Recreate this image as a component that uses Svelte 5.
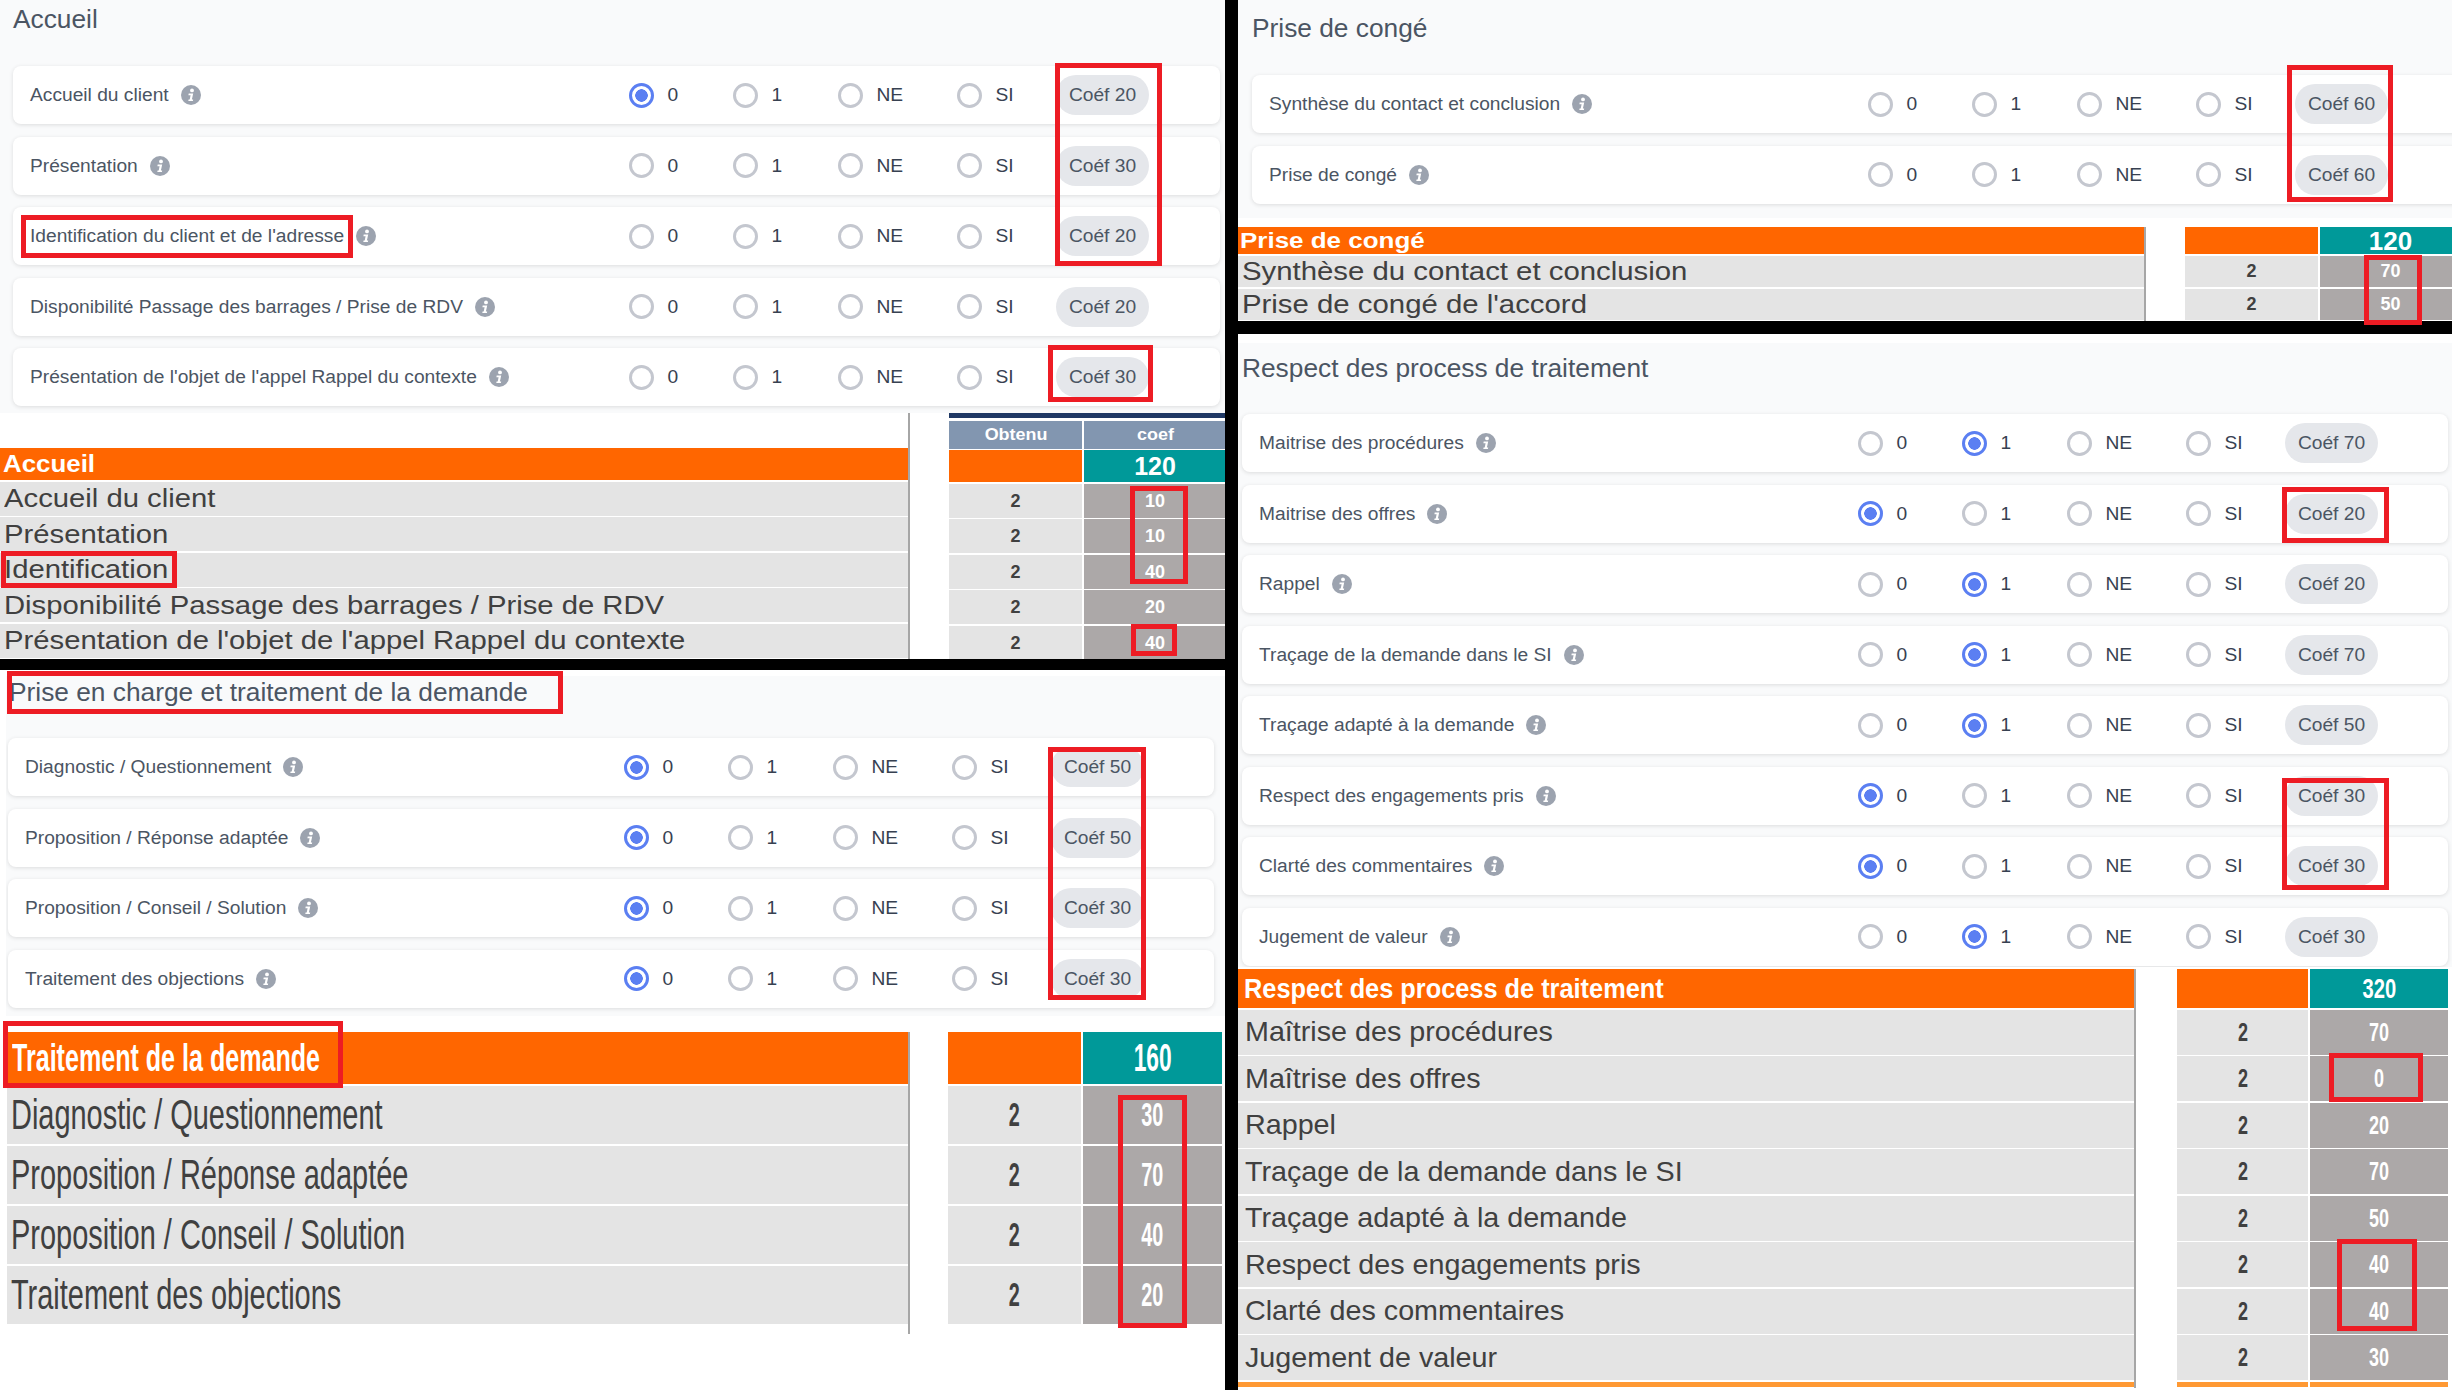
<script>
  const panels = [
    {
      cls: 'p1', title: 'Accueil',
      rows: [
        ['Accueil du client', 0, 20],
        ['Présentation', null, 30],
        ["Identification du client et de l'adresse", null, 20],
        ['Disponibilité Passage des barrages / Prise de RDV', null, 20],
        ["Présentation de l'objet de l'appel Rappel du contexte", null, 30]
      ]
    },
    {
      cls: 'p2', title: 'Prise en charge et traitement de la demande',
      rows: [
        ['Diagnostic / Questionnement', 0, 50],
        ['Proposition / Réponse adaptée', 0, 50],
        ['Proposition / Conseil / Solution', 0, 30],
        ['Traitement des objections', 0, 30]
      ]
    },
    {
      cls: 'p3', title: 'Prise de congé',
      rows: [
        ['Synthèse du contact et conclusion', null, 60],
        ['Prise de congé', null, 60]
      ]
    },
    {
      cls: 'p4', title: 'Respect des process de traitement',
      rows: [
        ['Maitrise des procédures', 1, 70],
        ['Maitrise des offres', 0, 20],
        ['Rappel', 1, 20],
        ['Traçage de la demande dans le SI', 1, 70],
        ['Traçage adapté à la demande', 1, 50],
        ['Respect des engagements pris', 0, 30],
        ['Clarté des commentaires', 0, 30],
        ['Jugement de valeur', 1, 30]
      ]
    }
  ];

  const tables = [
    {
      cls: 't1', head: 'Accueil', total: 120, header: true,
      rows: [['Accueil du client', 10], ['Présentation', 10], ['Identification', 40],
        ['Disponibilité Passage des barrages / Prise de RDV', 20],
        ["Présentation de l'objet de l'appel Rappel du contexte", 40]]
    },
    {
      cls: 't2', head: 'Traitement de la demande', total: 160,
      rows: [['Diagnostic / Questionnement', 30], ['Proposition / Réponse adaptée', 70],
        ['Proposition / Conseil / Solution', 40], ['Traitement des objections', 20]]
    },
    {
      cls: 't3', head: 'Prise de congé', total: 120,
      rows: [['Synthèse du contact et conclusion', 70], ["Prise de congé de l'accord", 50]]
    },
    {
      cls: 't4', head: 'Respect des process de traitement', total: 320, foot: true,
      rows: [['Maîtrise des procédures', 70], ['Maîtrise des offres', 0], ['Rappel', 20],
        ['Traçage de la demande dans le SI', 70], ['Traçage adapté à la demande', 50],
        ['Respect des engagements pris', 40], ['Clarté des commentaires', 40], ['Jugement de valeur', 30]]
    }
  ];

  const opts = ['0', '1', 'NE', 'SI'];

  // Red annotation rectangles drawn over the capture: [x, y, w, h]
  const marks = [
    [1055, 63, 107, 203], [21, 215, 332, 43], [1048, 345, 105, 57],
    [7, 671, 556, 43], [1048, 747, 98, 253], [3, 1021, 340, 67],
    [1118, 1095, 69, 233], [1130, 486, 58, 98], [1131, 624, 46, 32],
    [1, 551, 176, 37], [2287, 65, 106, 137], [2364, 255, 58, 70],
    [2282, 487, 107, 56], [2282, 778, 107, 112], [2329, 1053, 94, 49], [2337, 1239, 80, 92]
  ];
</script>

{#snippet panel(p)}
  <section class="panel {p.cls}">
    <h2>{p.title}</h2>
    <div class="cards">
      {#each p.rows as [label, sel, coef]}
        <div class="card">
          <div class="label">
            <span>{label}</span>
            <svg class="info" viewBox="0 0 20 20" aria-hidden="true">
              <circle cx="10" cy="10" r="10" fill="#9ca3af" />
              <circle cx="11" cy="5.4" r="1.9" fill="#fff" />
              <path d="M7.7 8.6h4.5l-1.3 5.9h1.3l-.3 1.6H7.3l.3-1.6h1.1l.9-4.3H7.4z" fill="#fff" />
            </svg>
          </div>
          {#each opts as o, i}
            <div class="opt">
              <span class="radio" class:on={sel === i}></span>
              <span>{o}</span>
            </div>
          {/each}
          <span class="pill">Coéf {coef}</span>
        </div>
      {/each}
    </div>
  </section>
{/snippet}

{#snippet table(t)}
  <section class="table {t.cls}">
    <div class="left">
      {#if t.header}<div class="head-gap"></div>{/if}
      <div class="cell orange name"><span class="fit">{t.head}</span></div>
      {#each t.rows as [label]}
        <div class="cell grey name"><span class="fit">{label}</span></div>
      {/each}
      {#if t.foot}<div class="foot"></div>{/if}
    </div>
    <div class="right">
      {#if t.header}
        <div class="navy"></div>
        <div class="pair">
          <div class="cell th"><span class="fit">Obtenu</span></div>
          <div class="cell th"><span class="fit">coef</span></div>
        </div>
      {/if}
      <div class="pair row-head">
        <div class="cell orange"></div>
        <div class="cell teal"><span class="fit">{t.total}</span></div>
      </div>
      {#each t.rows as [label, val]}
        <div class="pair">
          <div class="cell grey num"><span class="fit">2</span></div>
          <div class="cell dark val"><span class="fit">{val}</span></div>
        </div>
      {/each}
      {#if t.foot}<div class="pair"><div class="foot"></div><div class="foot"></div></div>{/if}
    </div>
  </section>
{/snippet}

<div class="page">
  <div class="col col-left">
    {@render panel(panels[0])}
    {@render table(tables[0])}
    <div class="bar"></div>
    {@render panel(panels[1])}
    {@render table(tables[1])}
  </div>
  <div class="divider"></div>
  <div class="col col-right">
    {@render panel(panels[2])}
    {@render table(tables[2])}
    <div class="bar"></div>
    {@render panel(panels[3])}
    {@render table(tables[3])}
  </div>
  {#each marks as [x, y, w, h]}
    <div class="mark" style="left:{x}px;top:{y}px;width:{w}px;height:{h}px"></div>
  {/each}
</div>

<style>
  :global(body) { margin: 0; background: #fff; }
  .page {
    position: relative;
    width: 2452px;
    height: 1390px;
    overflow: hidden;
    display: grid;
    grid-template-columns: 1225px 13px 1214px;
    font-family: "Liberation Sans", Arial, sans-serif;
    color: #4b5563;
  }
  .divider { background: #000; }
  .col { min-width: 0; }
  .bar { background: #000; height: 11px; }
  .col-right .bar { height: 13px; }

  .panel { background: #f9fafb; box-sizing: border-box; overflow: hidden; }
  .panel h2 { margin: 0; font-weight: 400; font-size: 26.3px; line-height: 32px; color: #4b5563; }
  .p1 { height: 413px; padding: 3px 5px 0 13px; }
  .p1 h2 { margin-bottom: 31px; }
  .p2 { height: 340px; margin: 6px 0 0 6px; padding: 0 11px 0 2px; }
  .p2 h2 { margin-bottom: 30px; padding-left: 1px; }
  .p3 { height: 218px; padding: 12px 0 0 14px; }
  .p3 h2 { margin-bottom: 31px; }
  .p3 .card { width: 1300px; }
  .p4 { height: 624px; margin-top: 9px; padding: 9px 4px 0 4px; }
  .p4 h2 { margin-bottom: 30px; }

  .cards { display: flex; flex-direction: column; gap: 12.5px; }
  .card {
    height: 58px;
    box-sizing: border-box;
    background: #fff;
    border-radius: 8px;
    box-shadow: 0 1px 4px rgba(0, 0, 0, .12);
    display: grid;
    grid-template-columns: 615.5px 104px 105px 119px 99.5px 93px;
    align-items: center;
    font-size: 19.2px;
    color: #374151;
  }
  .label { display: flex; align-items: center; gap: 12px; padding-left: 17px; color: #4b5563; white-space: nowrap; }
  .info { width: 20px; height: 20px; flex: none; }
  .opt { display: flex; align-items: center; gap: 14px; }
  .radio {
    width: 25px; height: 25px; box-sizing: border-box;
    border: 3px solid #c4c7cf; border-radius: 50%; background: #fff;
    display: block; flex: none;
  }
  .radio.on {
    border-color: #5b7ff2;
    background: radial-gradient(circle, #5b7ff2 0 6px, #fff 6.5px);
  }
  .pill {
    height: 40px; border-radius: 20px; background: #e5e7eb; color: #4b5563;
    display: flex; align-items: center; justify-content: center; white-space: nowrap;
  }

  .table {
    display: grid;
    font-family: "Liberation Sans", Arial, sans-serif;
    background: #fff;
    overflow: hidden;
  }
  .left { border-right: 2px solid #a6a6a6; display: flex; flex-direction: column; gap: 1.5px; box-sizing: border-box; }
  .right { display: flex; flex-direction: column; gap: 1.5px; min-width: 0; }
  .pair { display: grid; gap: 2px; }
  .cell { display: flex; align-items: center; overflow: hidden; white-space: nowrap; line-height: 1; }
  .fit { display: inline-block; }
  .name .fit { transform-origin: left center; }
  .orange { background: #ff6600; color: #fff; font-weight: 700; }
  .grey { background: #e4e4e4; color: #404040; }
  .teal { background: #009999; color: #fff; justify-content: center; }
  .dark { background: #aca8a8; color: #fff; justify-content: center; font-weight: 700; }
  .num { justify-content: center; font-weight: 700; color: #404040; }
  .th { background: #8296b0; color: #fff; justify-content: center; font-weight: 700; }
  .navy { background: #1f3864; height: 5px; margin-bottom: 1px; }
  .foot { background: #ff9933; height: 5px; }
  .name { padding-left: 4px; }

  .t1 { height: 246px; grid-template-columns: 910px 39px 276px; }
  .t1 .left { grid-column: 1; }
  .t1 .right { grid-column: 3; }
  .t1 .head-gap { height: 33.5px; background: #fff; }
  .t1 .pair { grid-template-columns: 133px 142px; }
  .t1 .cell.name { height: 34px; font-size: 25px; }
  .t1 .name .fit { transform: scaleX(1.17); }
  .t1 .cell.orange.name { height: 32px; font-size: 23px; padding-left: 3px; }
  .t1 .orange.name .fit { transform: scaleX(1.125); }
  .t1 .row-head .cell { height: 32px; }
  .t1 .pair > .grey, .t1 .pair > .dark { height: 34px; font-size: 18px; }
  .t1 .th { height: 28px; font-size: 16px; }
  .t1 .th .fit { transform: scaleX(1.12); }
  .t1 .teal { font-size: 25px; font-weight: 700; }

  .t2 { height: 359px; padding: 16px 0 0 7px; grid-template-columns: 903px 38px 276px; box-sizing: border-box; align-content: start; }
  .t2 .left { grid-column: 1; height: 302px; }
  .t2 .right { grid-column: 3; }
  .t2 .pair { grid-template-columns: 133px 139px; }
  .t2 .cell.name { height: 58.5px; font-size: 42px; }
  .t2 .cell.orange.name { height: 52px; font-size: 38px; padding-left: 5px; }
  .t2 .row-head .cell { height: 52px; }
  .t2 .pair > .grey, .t2 .pair > .dark { height: 58.5px; font-size: 33px; }
  .t2 .teal { font-size: 38px; font-weight: 700; }
  .t2 .left .fit { transform: scaleX(.689); }
  .t2 .left .orange .fit { transform: scaleX(.66); }
  .t2 .right .fit { transform: scaleX(.6); transform-origin: center; }

  .t3 { height: 103px; padding-top: 9px; box-sizing: border-box; grid-template-columns: 908px 39px 276px; }
  .t3 .left { grid-column: 1; }
  .t3 .right { grid-column: 3; }
  .t3 .pair { grid-template-columns: 133px 141px; }
  .t3 .cell.name { height: 31.5px; font-size: 25px; padding-left: 4px; }
  .t3 .name .fit { transform: scaleX(1.174); }
  .t3 .cell.orange.name { height: 27px; font-size: 22px; padding-left: 2px; }
  .t3 .orange.name .fit { transform: scaleX(1.18); }
  .t3 .row-head .cell { height: 27px; }
  .t3 .pair > .grey, .t3 .pair > .dark { height: 31.5px; font-size: 18px; }
  .t3 .teal { font-size: 26px; font-weight: 700; }

  .t4 { height: 421px; padding-top: 2px; box-sizing: border-box; grid-template-columns: 898px 41px 272px; }
  .t4 .left { grid-column: 1; }
  .t4 .right { grid-column: 3; }
  .t4 .pair { grid-template-columns: 131px 138px; }
  .t4 .cell.name { height: 45px; font-size: 28px; padding-left: 7px; }
  .t4 .name .fit { transform: scaleX(1.025); }
  .t4 .cell.orange.name { height: 39px; font-size: 28px; padding-left: 6px; }
  .t4 .orange.name .fit { transform: scaleX(.905); }
  .t4 .row-head .cell { height: 39px; }
  .t4 .pair > .grey, .t4 .pair > .dark { height: 45px; font-size: 25px; }
  .t4 .teal { font-size: 28px; font-weight: 700; }
  .t4 .right .fit { transform: scaleX(.72); }

  .mark {
    position: absolute;
    box-sizing: border-box;
    border: 5px solid #ed1c24;
    pointer-events: none;
  }
</style>
